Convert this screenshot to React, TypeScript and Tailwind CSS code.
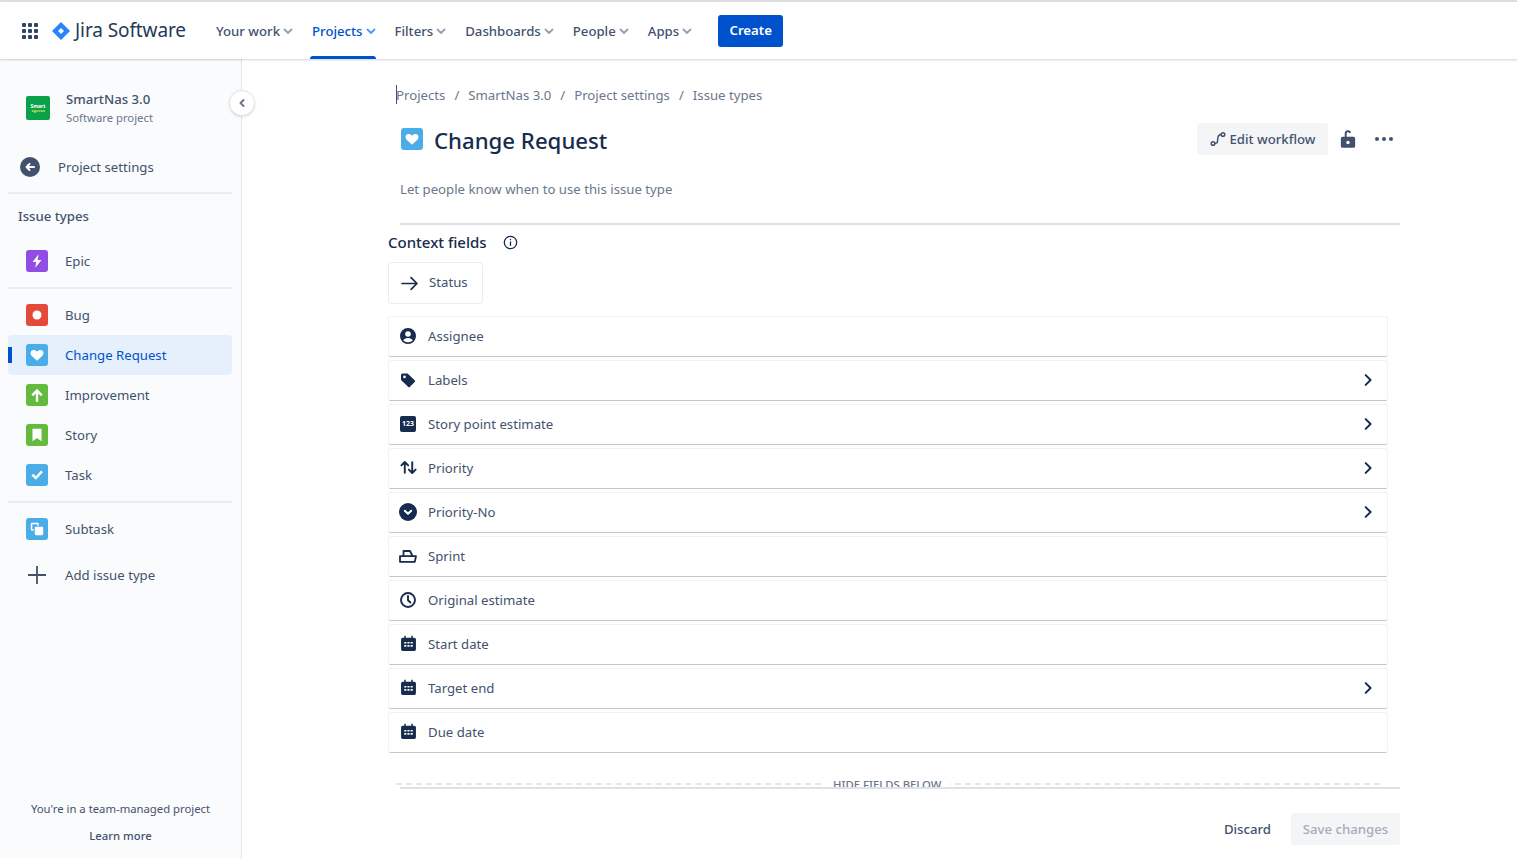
import React from "react";

const ChevronDown = ({ className = "" }: { className?: string }) => (
    <svg viewBox="0 0 12 12" className={`w-3 h-3 ${className}`} fill="none" stroke="currentColor" strokeWidth="1.8" strokeLinecap="round" strokeLinejoin="round">
        <path d="M2.5 4.5 6 8l3.500-3.500" />
    </svg>
);

const ChevronRight = () => (
    <svg viewBox="0 0 12 12" className="w-[14px] h-[14px] text-[#172b4d]" fill="none" stroke="currentColor" strokeWidth="1.7" strokeLinecap="round" strokeLinejoin="round">
        <path d="M4 1.800 8.200 6 4 10.200" />
    </svg>
);

const NavItem = ({ label, active }: { label: string; active?: boolean }) => (
    <div className={`relative h-[57px] flex items-center gap-[2px] px-[2px] text-[13.2px] font-medium ${active ? "text-[#0052cc]" : "text-[#42526e]"}`}>
        <span className="pt-[2px]">{label}</span>
        <ChevronDown className={active ? "text-[#4c9aff]" : "text-[#97a0af]"} />
        {active && <div className="absolute left-0 right-[3px] bottom-0 h-[3px] bg-[#0052cc] rounded-t-sm"></div>}
    </div>
);

const TypeIcon = ({ bg, children }: { bg: string; children: React.ReactNode }) => (
    <div className={`w-[22px] h-[22px] rounded-[3px] flex items-center justify-center shrink-0 ${bg}`}>
        <svg viewBox="0 0 16 16" className="w-[18px] h-[18px]" fill="white">
            {children}
        </svg>
    </div>
);

const epic = <path d="M9.500 2 4 8.800h3.300L6.500 14l5.500-6.800H8.500z" />;
const bug = <circle cx="8" cy="8" r="4" />;
const heart = <path d="M8 13.200 3.200 8.600C1.800 7.100 2 5 3.400 4.100c1.600-1 3.400-.5 4.600 1.100 1.200-1.600 3-2.100 4.600-1.100C14 5 14.200 7.100 12.800 8.600z" />;
const arrowUp = <path d="M8 2.400 13 7.600 11.500 9 9.100 6.700V14H6.900V6.700L4.500 9 3 7.600z" />;
const bookmark = <path d="M4 2.500h8v11L8 10.600 4 13.500z" />;
const check = <path d="M3 8.400 4.600 6.800 7 9.100l4.600-5 1.600 1.500L7 12.200z" />;
const subtask = (
    <>
        <path fillRule="evenodd" d="M3.500 2.500h5a1 1 0 0 1 1 1V5H8.200V3.800H3.800v4.400H5v1.300H3.500a1 1 0 0 1-1-1v-5a1 1 0 0 1 1-1z" />
        <rect x="6" y="6" width="7.500" height="7.500" rx="1" />
    </>
);

const SideRow = ({ icon, label, active }: { icon: React.ReactNode; label: string; active?: boolean }) => (
    <div className={`relative h-[40px] flex items-center pl-[18px] gap-[17px] rounded-[4px] text-[13.2px] ${active ? "bg-[#e6effc] text-[#0052cc]" : "text-[#42526e]"}`}>
        {active && <div className="absolute left-0 top-[12px] w-[4px] h-[16px] bg-[#0052cc]"></div>}
        {icon}
        <span className="pt-[2px]">{label}</span>
    </div>
);

const Divider = () => <div className="h-[2px] bg-[#ebecf0] ml-[8px] mr-[9px]"></div>;

const Sidebar = () => (
    <aside className="relative w-[242px] shrink-0 bg-[#fafbfc] border-r border-[#e4e6ea] flex flex-col">
        <div className="h-[80px] mt-[9px] flex items-center pl-[26px] gap-[16px]">
            <div className="w-[24px] h-[24px] rounded-[2px] bg-[#0ba14b] flex flex-col items-center justify-center leading-none">
                <span className="text-[5px] text-white font-bold">Smart</span>
                <span className="text-[4px] text-[#d5e04a] font-bold">sgsvsa</span>
            </div>
            <div className="flex flex-col">
                <span className="text-[13.2px] leading-[20px] font-medium text-[#42526e]">SmartNas 3.0</span>
                <span className="text-[11.3px] leading-[18px] text-[#6b778c]">Software project</span>
            </div>
        </div>
        <div className="h-[50px] flex items-center pl-[20px] gap-[18px] text-[13.2px] text-[#42526e] -mt-[6px]">
            <div className="w-[20px] h-[20px] rounded-full bg-[#42526e] flex items-center justify-center">
                <svg viewBox="0 0 12 12" className="w-3 h-3" fill="none" stroke="white" strokeWidth="2" strokeLinecap="round" strokeLinejoin="round">
                    <path d="M10 6H2.500M5.500 3 2.500 6l3 3" />
                </svg>
            </div>
            <span className="pt-[2px]">Project settings</span>
        </div>
        <Divider />
        <div className="pl-[18px] pt-[2px] h-[44px] flex items-center text-[13.2px] font-medium text-[#42526e]">Issue types</div>
        <div className="pl-[8px] pr-[9px] mt-[3px]">
            <SideRow icon={<TypeIcon bg="bg-[#904ee2]">{epic}</TypeIcon>} label="Epic" />
        </div>
        <div className="mt-[6px] mb-[6px]"><Divider /></div>
        <div className="pl-[8px] pr-[9px] flex flex-col">
            <SideRow icon={<TypeIcon bg="bg-[#e5493a]">{bug}</TypeIcon>} label="Bug" />
            <SideRow icon={<TypeIcon bg="bg-[#4bade8]">{heart}</TypeIcon>} label="Change Request" active />
            <SideRow icon={<TypeIcon bg="bg-[#63ba3c]">{arrowUp}</TypeIcon>} label="Improvement" />
            <SideRow icon={<TypeIcon bg="bg-[#63ba3c]">{bookmark}</TypeIcon>} label="Story" />
            <SideRow icon={<TypeIcon bg="bg-[#4bade8]">{check}</TypeIcon>} label="Task" />
        </div>
        <div className="mt-[6px] mb-[6px]"><Divider /></div>
        <div className="pl-[8px] pr-[9px] flex flex-col gap-[6px]">
            <SideRow icon={<TypeIcon bg="bg-[#4bade8]">{subtask}</TypeIcon>} label="Subtask" />
            <SideRow
                icon={
                    <svg viewBox="0 0 22 22" className="w-[22px] h-[22px] text-[#42526e]" fill="none" stroke="currentColor" strokeWidth="1.800">
                        <path d="M11 2v18M2 11h18" />
                    </svg>
                }
                label="Add issue type"
            />
        </div>
        <div className="mt-auto pb-[14px] flex flex-col items-center gap-[9px] text-[11.3px] text-[#42526e] leading-[18px]">
            <span>You're in a team-managed project</span>
            <span className="font-medium">Learn more</span>
        </div>
        {/* collapse button */}
        <div className="absolute top-[31px] -right-[14px] w-[26px] h-[26px] rounded-full bg-white border border-[#e4e6ea] shadow-sm flex items-center justify-center text-[#6b778c]">
            <svg viewBox="0 0 12 12" className="w-3 h-3" fill="none" stroke="currentColor" strokeWidth="2" strokeLinecap="round" strokeLinejoin="round">
                <path d="M7.500 3 4.500 6l3 3" />
            </svg>
        </div>
    </aside>
);

const navy = "#172b4d";

const calendar = (
    <svg viewBox="0 0 16 16" className="w-[17px] h-[17px]" fill={navy}>
        <path fillRule="evenodd" d="M4 .8h1.400v1.700h5.200V.8H12v1.700h1.500A1.500 1.500 0 0 1 15 4v9.500a1.500 1.500 0 0 1-1.500 1.500h-11A1.500 1.500 0 0 1 1 13.500V4a1.500 1.500 0 0 1 1.500-1.500H4zM4 6.500V8h2V6.500zm3 0V8h2V6.500zm3 0V8h2V6.500zM4 9.500V11h2V9.500zm3 0V11h2V9.500zm3 0V11h2V9.500z" />
    </svg>
);

const fields: { label: string; chevron?: boolean; icon: React.ReactNode }[] = [
    {
        label: "Assignee",
        icon: (
            <svg viewBox="0 0 16 16" className="w-4 h-4" fill={navy}>
                <path fillRule="evenodd" d="M8 0a8 8 0 1 1 0 16A8 8 0 0 1 8 0zm0 3.200a2.800 2.800 0 1 0 0 5.600 2.800 2.800 0 0 0 0-5.600zM3.300 12.500A5.900 5.900 0 0 0 8 14.200a5.900 5.900 0 0 0 4.700-1.700C12.300 10.900 10.400 10 8 10s-4.300.9-4.700 2.500z" />
            </svg>
        ),
    },
    {
        label: "Labels",
        chevron: true,
        icon: (
            <svg viewBox="0 0 16 16" className="w-4 h-4" fill={navy}>
                <path fillRule="evenodd" d="M1 3a1.500 1.500 0 0 1 1.500-1.500H7.600L14.700 8.200a1.300 1.300 0 0 1 0 1.900L10 14.800a1.300 1.300 0 0 1-1.900 0L1 8zM4.500 3.600a1.300 1.300 0 1 0 0 2.600 1.300 1.300 0 0 0 0-2.600z" />
            </svg>
        ),
    },
    {
        label: "Story point estimate",
        chevron: true,
        icon: (
            <div className="w-4 h-4 rounded-[2px] bg-[#172b4d] text-white text-[7px] font-bold flex items-center justify-center leading-none">123</div>
        ),
    },
    {
        label: "Priority",
        chevron: true,
        icon: (
            <svg viewBox="0 0 16 16" className="w-[17px] h-[17px]" fill="none" stroke={navy} strokeWidth="1.800" strokeLinecap="round" strokeLinejoin="round">
                <path d="M4.500 13V3.200M1.300 6l3.200-3.200L7.700 6M11.500 3v9.800M8.300 10l3.200 3.200 3.200-3.200" />
            </svg>
        ),
    },
    {
        label: "Priority-No",
        chevron: true,
        icon: (
            <svg viewBox="0 0 18 18" className="w-[18px] h-[18px]">
                <circle cx="9" cy="9" r="9" fill={navy} />
                <path d="M5.800 7.800 9 10.800l3.200-3" fill="none" stroke="white" strokeWidth="2" strokeLinecap="round" strokeLinejoin="round" />
            </svg>
        ),
    },
    {
        label: "Sprint",
        icon: (
            <svg viewBox="0 0 18 14" className="w-[18px] h-[14px]" fill="none" stroke={navy} strokeWidth="1.800" strokeLinejoin="round">
                <path d="M4.500 7V2h6.500L13.500 7M1 7.200h16l-1.200 5.600H1z" />
            </svg>
        ),
    },
    {
        label: "Original estimate",
        icon: (
            <svg viewBox="0 0 16 16" className="w-4 h-4" fill="none" stroke={navy} strokeWidth="1.900" strokeLinecap="round" strokeLinejoin="round">
                <circle cx="8" cy="8" r="7" />
                <path d="M8 4v4.200l2.400 2.300" />
            </svg>
        ),
    },
    { label: "Start date", icon: calendar },
    { label: "Target end", chevron: true, icon: calendar },
    { label: "Due date", icon: calendar },
];

const FieldRow = ({ label, chevron, icon }: { label: string; chevron?: boolean; icon: React.ReactNode }) => (
    <div className="h-[41px] flex items-center rounded-[3px] border border-[#f1f2f4] border-b-[#c1c7d0] pl-[10px] pr-[12px] bg-white">
        <div className="w-[18px] flex justify-center shrink-0 -mt-[2px]">{icon}</div>
        <span className="ml-[11px] text-[13.2px] text-[#42526e]">{label}</span>
        {chevron && (
            <div className="ml-auto -mt-[2px]">
                <ChevronRight />
            </div>
        )}
    </div>
);

const App = () => {
    return (
        <div className="w-full h-[859px] overflow-hidden bg-white flex flex-col font-['Noto_Sans','Open_Sans',sans-serif]">
            {/* TOP BAR */}
            <div className="h-[2px] bg-[#dfdfdf] shrink-0"></div>
            <header className="h-[57px] shrink-0 bg-white flex items-center shadow-[0_1px_2px_rgba(9,30,66,0.2)] relative z-10">
                <svg viewBox="0 0 16 16" className="w-[16px] h-[16px] ml-[22px]" fill="#344563">
                    <rect x="0" y="0" width="4" height="4" rx="1" />
                    <rect x="6" y="0" width="4" height="4" rx="1" />
                    <rect x="12" y="0" width="4" height="4" rx="1" />
                    <rect x="0" y="6" width="4" height="4" rx="1" />
                    <rect x="6" y="6" width="4" height="4" rx="1" />
                    <rect x="12" y="6" width="4" height="4" rx="1" />
                    <rect x="0" y="12" width="4" height="4" rx="1" />
                    <rect x="6" y="12" width="4" height="4" rx="1" />
                    <rect x="12" y="12" width="4" height="4" rx="1" />
                </svg>
                <svg viewBox="0 0 18 18" className="w-[18px] h-[18px] ml-[14px]">
                    <path d="M9 0 18 9l-9 9-9-9z" fill="#2684ff" />
                    <path d="M9 6 12 9l-3 3-3-3z" fill="white" />
                </svg>
                <span className="ml-[5px] text-[19px] text-[#253858] tracking-[-0.1px] w-[113px] whitespace-nowrap">Jira Software</span>
                <div className="flex items-center ml-[26px] gap-[14px]">
                    <NavItem label="Your work" />
                    <NavItem label="Projects" active />
                    <NavItem label="Filters" />
                    <NavItem label="Dashboards" />
                    <NavItem label="People" />
                    <NavItem label="Apps" />
                </div>
                <button className="ml-[23px] h-[32px] w-[65px] pt-[1px] bg-[#0052cc] text-white text-[13.2px] font-semibold rounded-[3px]">Create</button>
            </header>

            <div className="flex-1 flex min-h-0">
                <Sidebar />
                <main className="flex-1 min-w-0 pl-[146px] pr-[117px] relative">
                    {/* BREADCRUMBS */}
                    <div className="pl-[8px] pt-[26px] flex items-center h-[47px] text-[13.2px] text-[#6b778c] gap-[9px]">
                        <span>Projects</span>
                        <span>/</span>
                        <span>SmartNas 3.0</span>
                        <span>/</span>
                        <span>Project settings</span>
                        <span>/</span>
                        <span>Issue types</span>
                    </div>
                    <div className="absolute left-[154px] top-[26px] w-[1px] h-[19px] bg-[#42526e]"></div>

                    {/* TITLE */}
                    <div className="pl-[13px] flex items-center h-[46px] mt-[12px]">
                        <div className="w-[22px] h-[22px] -mt-[4px] rounded-[3px] bg-[#4bade8] flex items-center justify-center">
                            <svg viewBox="0 0 16 16" className="w-[18px] h-[18px]" fill="white">{heart}</svg>
                        </div>
                        <h1 className="ml-[11px] text-[22.2px] font-medium text-[#172b4d]">Change Request</h1>
                        <div className="ml-auto flex items-center -mt-[4px]">
                            <button className="h-[32px] w-[131px] rounded-[3px] bg-[#f4f5f7] flex items-center justify-center gap-[4px] text-[13.2px] font-medium text-[#42526e]">
                                <svg viewBox="0 0 16 16" className="w-4 h-4" fill="none" stroke="#42526e" strokeWidth="1.500">
                                    <circle cx="3" cy="12.500" r="1.800" />
                                    <circle cx="13" cy="3.500" r="1.800" />
                                    <path d="M4.800 12.500c3 0 2.600-1.500 2.900-4.500.2-3 1-4.500 3.500-4.500" />
                                </svg>
                                <span className="pt-[1px]">Edit workflow</span>
                            </button>
                            <svg viewBox="0 0 16 20" className="w-[18px] h-[22px] ml-[11px]" fill="#42526e">
                                <path fillRule="evenodd" d="M5 8V5a3 3 0 0 1 5.900-.8l-1.800.5A1.200 1.200 0 0 0 6.800 5v3H13a1.500 1.500 0 0 1 1.500 1.500v7A1.500 1.500 0 0 1 13 18H3a1.500 1.500 0 0 1-1.500-1.500v-7A1.500 1.500 0 0 1 3 8zm3 3.500a1.600 1.600 0 1 0 0 3.200 1.600 1.600 0 0 0 0-3.200z" />
                            </svg>
                            <div className="ml-[18px] mr-[7px] flex items-center gap-[3px]">
                                <div className="w-[4px] h-[4px] rounded-full bg-[#42526e]"></div>
                                <div className="w-[4px] h-[4px] rounded-full bg-[#42526e]"></div>
                                <div className="w-[4px] h-[4px] rounded-full bg-[#42526e]"></div>
                            </div>
                        </div>
                    </div>

                    <p className="pl-[12px] mt-[15px] text-[13.2px] leading-[20px] text-[#6b778c]">Let people know when to use this issue type</p>
                    <div className="h-[2px] bg-[#dfe1e6] ml-[12px] mt-[24px]"></div>

                    {/* CONTEXT FIELDS */}
                    <div className="flex items-center h-[34px] gap-[16px] text-[15px] font-medium text-[#172b4d]">
                        <span>Context fields</span>
                        <svg viewBox="0 0 16 16" className="w-[15px] h-[15px]" fill="none" stroke="#172b4d" strokeWidth="1.400" strokeLinecap="round">
                            <circle cx="8" cy="8" r="6.600" />
                            <path d="M8 7.300V11M8 4.800v.2" />
                        </svg>
                    </div>
                    <div className="mr-[12px]">
                        <div className="w-[95px] h-[42px] mt-[3px] flex items-center rounded-[3px] border border-[#ebecf0] pl-[12px] gap-[11px] text-[13.2px] text-[#42526e]">
                            <svg viewBox="0 0 16 16" className="w-[17px] h-[17px]" fill="none" stroke="#172b4d" strokeWidth="1.600" strokeLinecap="round" strokeLinejoin="round">
                                <path d="M1 8h14M9.500 2.500 15 8l-5.500 5.500" />
                            </svg>
                            Status
                        </div>
                        <div className="mt-[12px] flex flex-col gap-[3px]">
                            {fields.map((field) => (
                                <FieldRow key={field.label} {...field} />
                            ))}
                        </div>
                    </div>

                    {/* HIDE FIELDS */}
                    <div className="relative h-[36px] overflow-hidden">
                        <div className="absolute left-[8px] right-[20px] top-[30px] border-t-2 border-dashed border-[#e4e6ea]"></div>
                        <div className="absolute left-[437px] top-[24px] h-[10px] overflow-hidden bg-white px-[8px]">
                            <div className="text-[11.3px] font-medium leading-[16px] text-[#6b778c] whitespace-nowrap">HIDE FIELDS BELOW</div>
                        </div>
                        <div className="absolute left-[12px] right-0 top-[34px] h-[2px] bg-[#dfe1e6]"></div>
                    </div>

                    {/* FOOTER */}
                    <div className="flex justify-end items-center mt-[24px] gap-[8px]">
                        <button className="h-[32px] px-[12px] pt-[1px] text-[13.2px] font-medium text-[#42526e]">Discard</button>
                        <button className="h-[32px] w-[109px] pt-[1px] rounded-[3px] bg-[#f4f5f7] text-[13.2px] font-medium text-[#a5adba]">Save changes</button>
                    </div>
                </main>
            </div>
        </div>
    );
};

export default App;
